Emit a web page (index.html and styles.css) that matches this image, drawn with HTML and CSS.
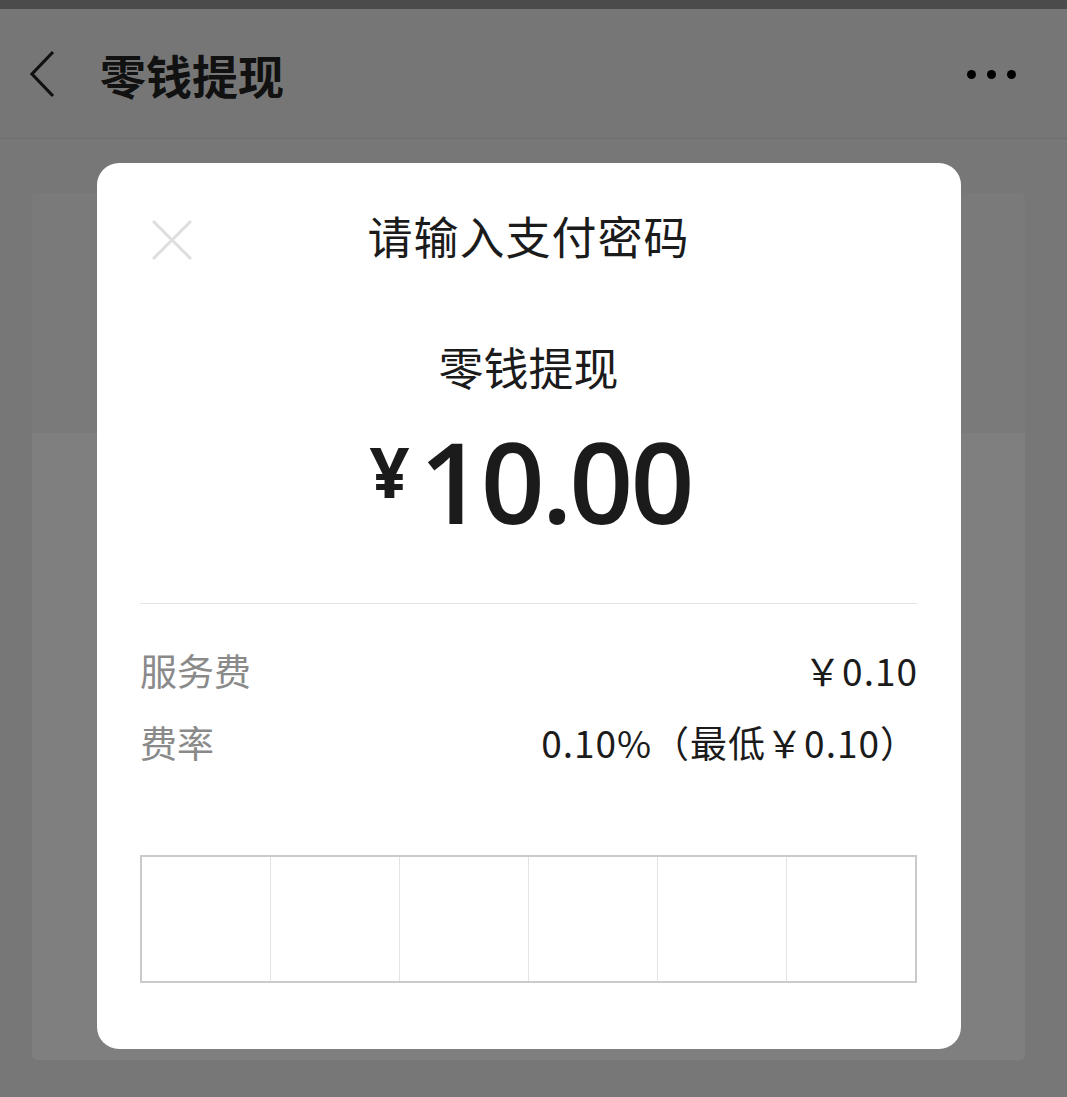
FILE: index.html
```html
<!DOCTYPE html>
<html lang="zh-CN">
<head>
    <meta charset="UTF-8">
    <meta name="viewport" content="width=device-width, initial-scale=1.0">
    <title>零钱提现</title>
    <link rel="stylesheet" href="styles.css">
</head>
<body>

<div class="status-bar"></div>
<div class="header">
    <svg class="back" width="26" height="48" viewBox="0 0 26 48">
        <path d="M24 2 L3 24 L24 46" fill="none" stroke="#222" stroke-width="3.2"/>
    </svg>
    <h1>零钱提现</h1>
    <div class="more">
        <span></span><span></span><span></span>
    </div>
</div>

<div class="page">
    <div class="card">
        <div class="card-top"></div>
        <div class="card-body"></div>
    </div>
</div>

<!-- password dialog over the page -->
<div class="mask">
    <div class="dialog">
        <div class="dialog-head">
            <svg class="close" width="42" height="42" viewBox="0 0 42 42">
                <path d="M2 2 L40 40 M40 2 L2 40" stroke="#dedede" stroke-width="3"/>
            </svg>
            <div class="dialog-title">请输入支付密码</div>
        </div>
        <div class="subtitle">零钱提现</div>
        <div class="amount">
            <span class="yen">¥</span>
            <span class="num">10.00</span>
        </div>
        <div class="divider"></div>
        <div class="fee-row">
            <span class="label">服务费</span>
            <span class="value">￥0.10</span>
        </div>
        <div class="fee-row">
            <span class="label">费率</span>
            <span class="value">0.10%（最低￥0.10）</span>
        </div>
        <div class="pwd-box">
            <div class="cell"></div>
            <div class="cell"></div>
            <div class="cell"></div>
            <div class="cell"></div>
            <div class="cell"></div>
            <div class="cell"></div>
        </div>
    </div>
</div>

</body>
</html>
```

FILE: styles.css
```css
body {
    margin: 0;
    font-family: "Noto Sans CJK SC", "Noto Sans", sans-serif;
    background-color: #eeeeee;
    height: 1097px;
    overflow: hidden;
}
.status-bar {
    height: 9px;
    background-color: #979797;
}
.header {
    height: 130px;
    display: flex;
    align-items: center;
    background-color: #ededed;
    border-bottom: 1px solid #dcdcdc;
    box-sizing: border-box;
    padding: 0 51px 0 29px;
}
.back {
    margin-top: 1px;
}
.header h1 {
    margin: 0 0 0 45px;
    font-size: 46px;
    font-weight: 700;
    color: #222;
    flex: 1;
}
.more {
    display: flex;
    gap: 11px;
    margin-top: 2px;
}
.more span {
    width: 9px;
    height: 9px;
    border-radius: 50%;
    background-color: #000;
}
.page {
    padding: 54px 42px 0 32px;
}
.card {
    border-radius: 5px;
    overflow: hidden;
}
.card-top {
    height: 240px;
    background-color: #f5f5f5;
}
.card-body {
    height: 627px;
    background-color: #fff;
}
.mask {
    position: fixed;
    inset: 0;
    background-color: rgba(0, 0, 0, 0.5);
    padding: 163px 0 0 97px;
}
.dialog {
    width: 864px;
    box-sizing: border-box;
    background-color: #fff;
    border-radius: 22px;
    padding: 0 44px 66px 43px;
    display: flex;
    flex-direction: column;
    color: #1b1b1b;
}
.dialog-head {
    height: 154px;
    box-sizing: border-box;
    padding-bottom: 9px;
    display: flex;
    align-items: center;
    position: relative;
}
.close {
    position: absolute;
    left: 11px;
    top: 56px;
}
.dialog-title {
    flex: 1;
    text-align: center;
    font-size: 45px;
    letter-spacing: 1px;
}
.subtitle {
    margin-top: 20px;
    line-height: 60px;
    font-size: 45px;
    text-align: center;
}
.amount {
    margin-top: 24px;
    height: 120px;
    display: flex;
    justify-content: center;
    align-items: flex-start;
    gap: 10px;
    font-family: "Open Sans", sans-serif;
    padding-left: 4px;
}
.yen {
    margin-top: 14px;
    font-size: 70px;
    line-height: 73px;
    font-weight: 700;
}
.num {
    font-size: 112px;
    line-height: 120px;
    font-weight: 600;
    letter-spacing: -3px;
}
.divider {
    margin-top: 62px;
    height: 1px;
    background-color: #e5e5e5;
}
.fee-row {
    height: 72px;
    display: flex;
    justify-content: space-between;
    align-items: center;
    font-size: 37px;
}
.divider + .fee-row {
    margin-top: 30px;
}
.label {
    color: #8a8a8a;
}
.value {
    color: #1b1b1b;
    letter-spacing: 1px;
    margin-right: -1px;
}
.pwd-box {
    margin-top: 77px;
    height: 128px;
    display: flex;
    border: 2px solid #cacaca;
    box-sizing: border-box;
}
.cell {
    flex: 1;
    border-left: 1px solid #e3e3e3;
}
.cell:first-child {
    border-left: none;
}
```
